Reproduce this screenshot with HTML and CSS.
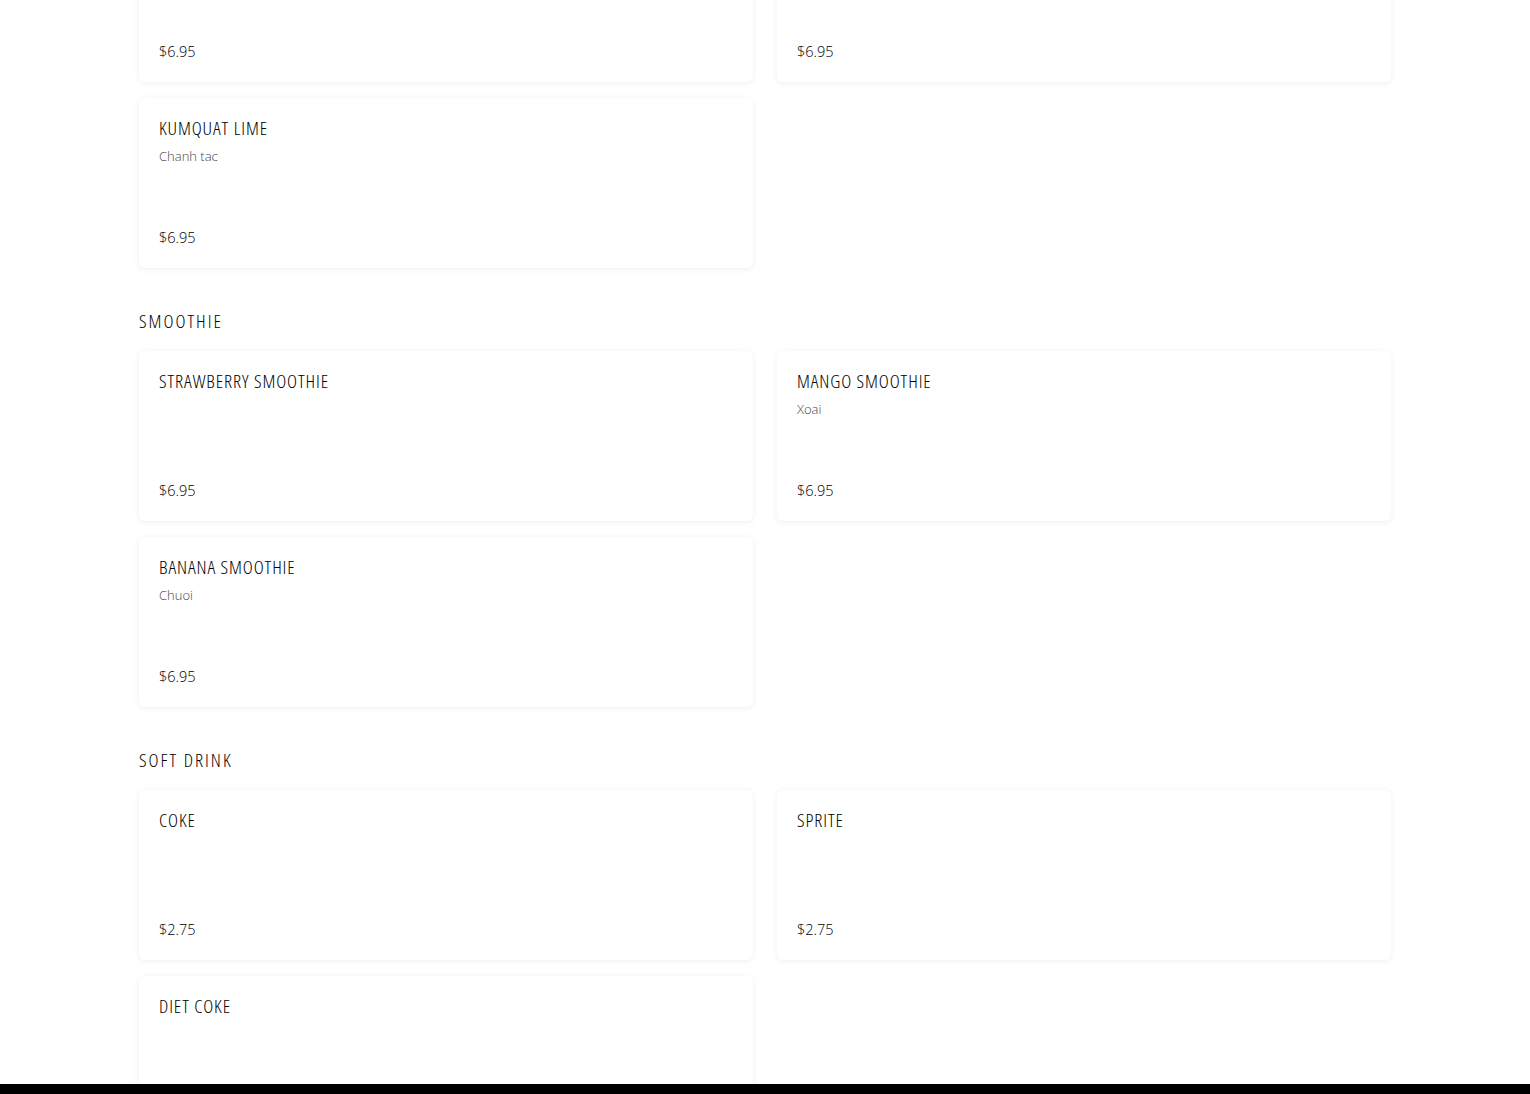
FILE: index.html
```html
<!DOCTYPE html>
<html>
<head>
    <title>Menu</title>
    <link rel="stylesheet" href="styles.css">
</head>
<body>
    <div class="menu">
        <div class="section first">
            <div class="items">
                <div class="item">
                    <div>
                        <div class="item-name">PASSION FRUIT</div>
                    </div>
                    <div class="item-price">$6.95</div>
                </div>
                <div class="item">
                    <div>
                        <div class="item-name">LYCHEE</div>
                    </div>
                    <div class="item-price">$6.95</div>
                </div>
                <div class="item">
                    <div>
                        <div class="item-name">KUMQUAT LIME</div>
                        <div class="item-desc">Chanh tac</div>
                    </div>
                    <div class="item-price">$6.95</div>
                </div>
            </div>
        </div>

        <div class="section">
            <h2 class="section-title">SMOOTHIE</h2>
            <div class="items">
                <div class="item">
                    <div>
                        <div class="item-name">STRAWBERRY SMOOTHIE</div>
                    </div>
                    <div class="item-price">$6.95</div>
                </div>
                <div class="item">
                    <div>
                        <div class="item-name">MANGO SMOOTHIE</div>
                        <div class="item-desc">Xoai</div>
                    </div>
                    <div class="item-price">$6.95</div>
                </div>
                <div class="item">
                    <div>
                        <div class="item-name">BANANA SMOOTHIE</div>
                        <div class="item-desc">Chuoi</div>
                    </div>
                    <div class="item-price">$6.95</div>
                </div>
            </div>
        </div>

        <div class="section">
            <h2 class="section-title">SOFT DRINK</h2>
            <div class="items">
                <div class="item">
                    <div>
                        <div class="item-name">COKE</div>
                    </div>
                    <div class="item-price">$2.75</div>
                </div>
                <div class="item">
                    <div>
                        <div class="item-name">SPRITE</div>
                    </div>
                    <div class="item-price">$2.75</div>
                </div>
                <div class="item">
                    <div>
                        <div class="item-name">DIET COKE</div>
                    </div>
                    <div class="item-price">$2.75</div>
                </div>
            </div>
        </div>
    </div>

    <div class="bottom-bar"></div>
</body>
</html>
```

FILE: styles.css
```css
body {
    font-family: "Open Sans", Lato, sans-serif;
    margin: 0;
    padding: 0;
    background-color: #ffffff;
    color: #000;
    overflow: hidden;
}

.menu {
    max-width: 1252px;
    margin: -88px auto 0;
}

.section {
    margin-top: 41px;
}

.section.first {
    margin-top: 0;
}

.section-title {
    margin: 0 0 18px;
    font-size: 19px;
    font-weight: 300;
    font-stretch: 75%;
    line-height: 24px;
    letter-spacing: 2px;
    color: #000;
}

.items {
    display: grid;
    grid-template-columns: 1fr 1fr;
    column-gap: 24px;
    row-gap: 16px;
}

.item {
    height: 170px;
    box-sizing: border-box;
    padding: 20px;
    background-color: #ffffff;
    border-radius: 6px;
    box-shadow: 0 1px 6px rgba(0, 0, 0, 0.07);
    display: flex;
    flex-direction: column;
    justify-content: space-between;
}

.item-name {
    font-size: 19px;
    font-weight: 300;
    font-stretch: 75%;
    line-height: 20px;
    letter-spacing: 0.9px;
    color: #000;
}

.item-desc {
    margin-top: 8px;
    font-size: 13px;
    font-weight: 300;
    line-height: 20px;
    color: #444;
}

.item-price {
    font-size: 14.5px;
    font-weight: 300;
    line-height: 20px;
    color: #000;
}

.bottom-bar {
    position: fixed;
    left: 0;
    right: 0;
    bottom: 0;
    height: 10px;
    background-color: #000;
}
```
